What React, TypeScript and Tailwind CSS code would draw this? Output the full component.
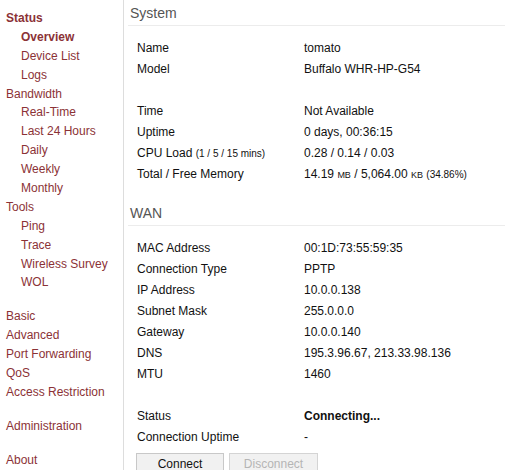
const navRed = 'text-[#8b3236]';

type NavItem = { label: string; sub?: boolean; bold?: boolean; gap?: boolean };

const nav: NavItem[] = [
  { label: 'Status', bold: true },
  { label: 'Overview', sub: true, bold: true },
  { label: 'Device List', sub: true },
  { label: 'Logs', sub: true },
  { label: 'Bandwidth' },
  { label: 'Real-Time', sub: true },
  { label: 'Last 24 Hours', sub: true },
  { label: 'Daily', sub: true },
  { label: 'Weekly', sub: true },
  { label: 'Monthly', sub: true },
  { label: 'Tools' },
  { label: 'Ping', sub: true },
  { label: 'Trace', sub: true },
  { label: 'Wireless Survey', sub: true },
  { label: 'WOL', sub: true },
  { label: 'Basic', gap: true },
  { label: 'Advanced' },
  { label: 'Port Forwarding' },
  { label: 'QoS' },
  { label: 'Access Restriction' },
  { label: 'Administration', gap: true },
  { label: 'About', gap: true },
];

function Row({ label, children }: { label: React.ReactNode; children?: React.ReactNode }) {
  return (
    <div className="flex h-[21px] items-center">
      <div className="w-[167px] shrink-0">{label}</div>
      <div>{children}</div>
    </div>
  );
}

function Section({ title, children }: { title: string; children: React.ReactNode }) {
  return (
    <div>
      <div className="pt-[5px] pb-[3px] pl-[2px] text-[14px] leading-[17px] text-[#555] border-b border-[#ececec]">
        {title}
      </div>
      <div className="mt-[11px] ml-[9px]">{children}</div>
    </div>
  );
}

export default function App() {
  return (
    <div
      className="flex w-[505px] h-[470px] overflow-hidden bg-white text-[12px] text-[#111]"
      style={{ fontFamily: '"Liberation Sans", Arial, sans-serif' }}
    >
      {/* Sidebar */}
      <div className="w-[123px] shrink-0 pt-[9px]">
        {nav.map((n) => (
          <div
            key={n.label}
            className={`h-[18.9px] leading-[18.9px] ${navRed} ${n.sub ? 'pl-[21px]' : 'pl-[6px]'} ${
              n.bold ? 'font-bold' : ''
            } ${n.gap ? 'mt-[15px]' : ''}`}
          >
            {n.label}
          </div>
        ))}
      </div>

      {/* Content */}
      <div className="flex-1 border-l border-[#dddddd] pl-[4px]">
        <Section title="System">
          <Row label="Name">tomato</Row>
          <Row label="Model">Buffalo WHR-HP-G54</Row>
          <Row label="" />
          <Row label="Time">Not Available</Row>
          <Row label="Uptime">0 days, 00:36:15</Row>
          <Row
            label={
              <>
                CPU Load <span className="text-[10px]">(1 / 5 / 15 mins)</span>
              </>
            }
          >
            0.28 / 0.14 / 0.03
          </Row>
          <Row label="Total / Free Memory">
            14.19 <span className="text-[9px]">MB</span> / 5,064.00{' '}
            <span className="text-[9px]">KB</span> <span className="text-[10px]">(34.86%)</span>
          </Row>
        </Section>

        <div className="h-[16px]" />

        <Section title="WAN">
          <Row label="MAC Address">00:1D:73:55:59:35</Row>
          <Row label="Connection Type">PPTP</Row>
          <Row label="IP Address">10.0.0.138</Row>
          <Row label="Subnet Mask">255.0.0.0</Row>
          <Row label="Gateway">10.0.0.140</Row>
          <Row label="DNS">195.3.96.67, 213.33.98.136</Row>
          <Row label="MTU">1460</Row>
          <Row label="" />
          <Row label="Status">
            <span className="font-bold">Connecting...</span>
          </Row>
          <Row label="Connection Uptime">-</Row>
          <div className="flex gap-[5px] mt-[6px] -ml-[1px]">
            <button className="w-[88px] h-[21px] bg-[#f1f1f1] border border-[#c8c8c8] text-[12px] text-[#111]">
              Connect
            </button>
            <button className="w-[89px] h-[21px] bg-[#f1f1f1] border border-[#d4d4d4] text-[12px] text-[#b5b5b5]">
              Disconnect
            </button>
          </div>
        </Section>
      </div>
    </div>
  );
}
